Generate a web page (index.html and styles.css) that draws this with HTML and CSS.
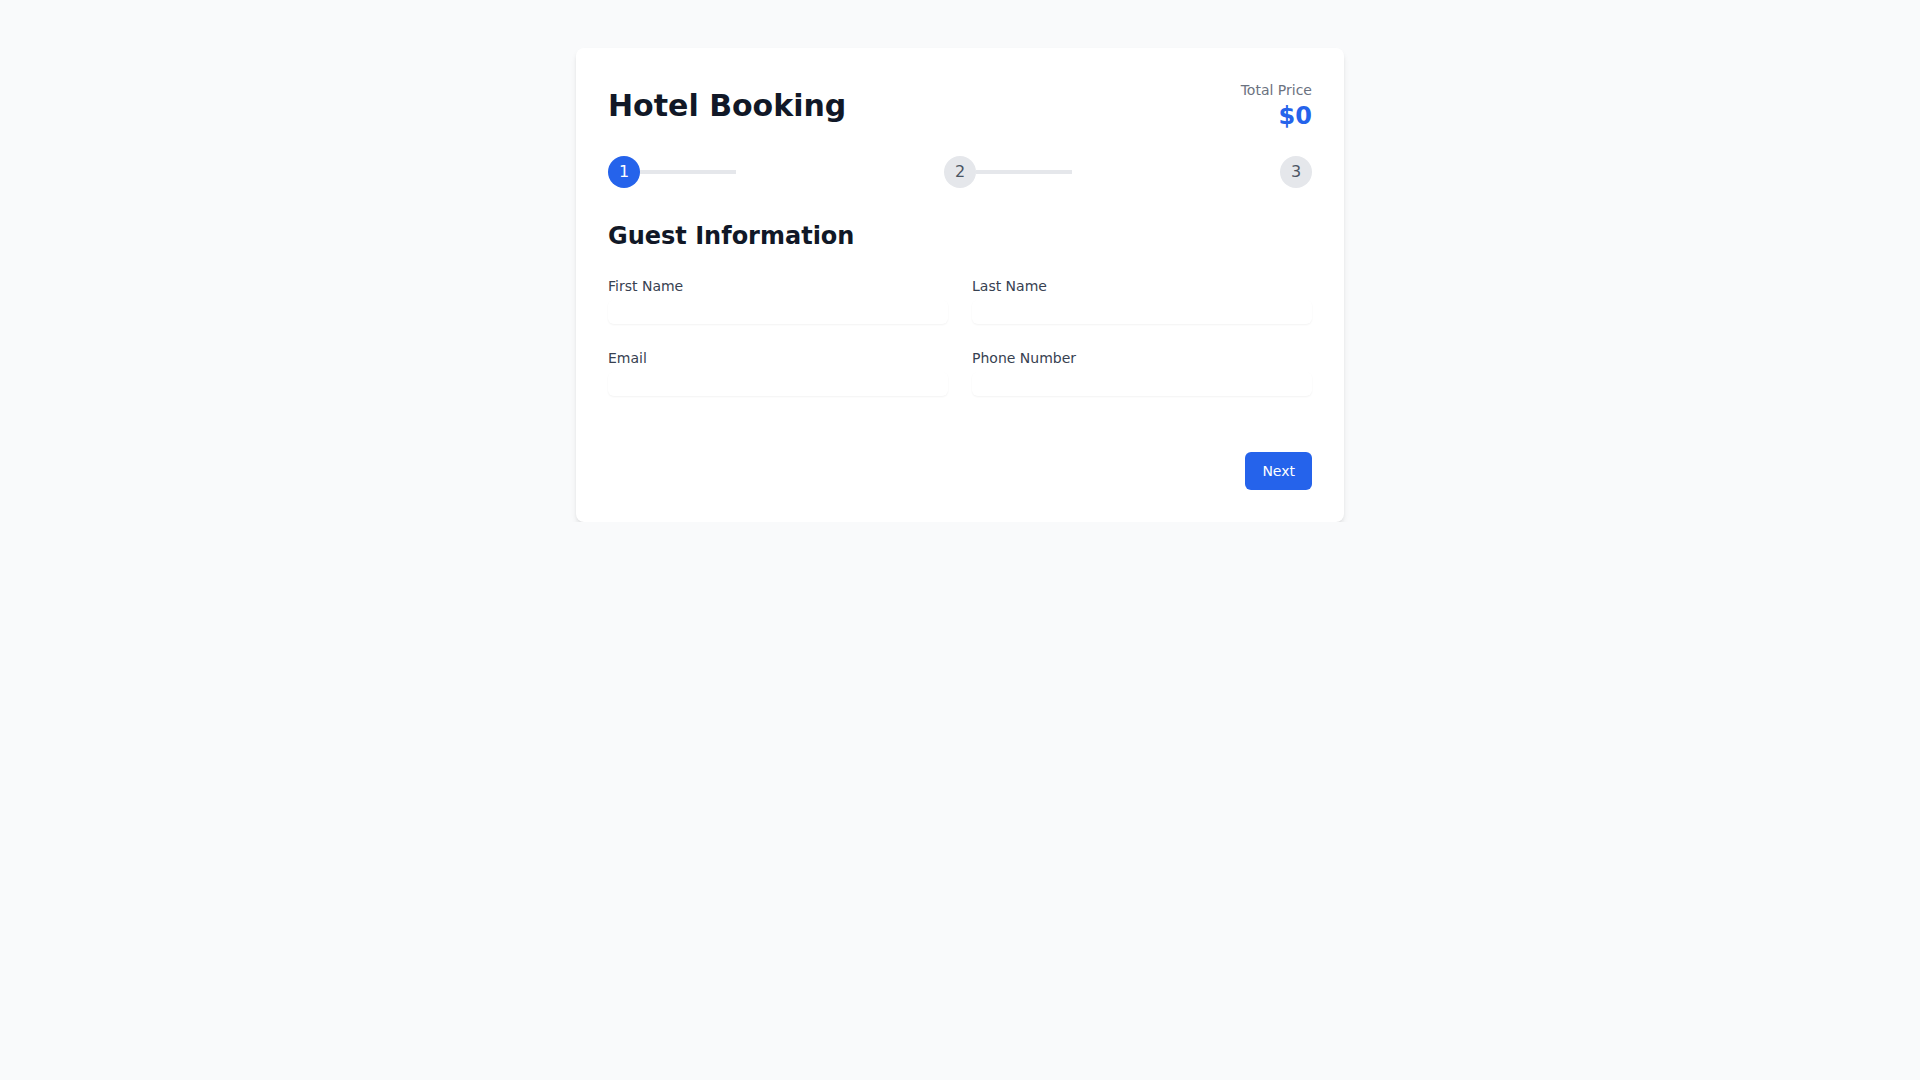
FILE: index.html
```html
<!DOCTYPE html>
<html lang="en">
<head>
<meta charset="utf-8">
<title>Hotel Booking</title>
<link rel="stylesheet" href="styles.css">
</head>
<body>
<main class="card">
  <header class="card-header">
    <h1 class="title">Hotel Booking</h1>
    <div class="price">
      <div class="price-label">Total Price</div>
      <div class="price-value">$0</div>
    </div>
  </header>

  <div class="stepper">
    <div class="step">
      <div class="step-circle active">1</div>
      <div class="step-line"></div>
    </div>
    <div class="step">
      <div class="step-circle">2</div>
      <div class="step-line"></div>
    </div>
    <div class="step">
      <div class="step-circle">3</div>
    </div>
  </div>

  <h2 class="section-title">Guest Information</h2>

  <form class="form-grid">
    <div class="field">
      <label class="label">First Name</label>
      <input class="input" type="text">
    </div>
    <div class="field">
      <label class="label">Last Name</label>
      <input class="input" type="text">
    </div>
    <div class="field">
      <label class="label">Email</label>
      <input class="input" type="email">
    </div>
    <div class="field">
      <label class="label">Phone Number</label>
      <input class="input" type="tel">
    </div>
  </form>

  <div class="actions">
    <button class="btn" type="button">Next</button>
  </div>
</main>
</body>
</html>
```

FILE: styles.css
```css
* {
  box-sizing: border-box;
}

html, body {
  margin: 0;
  padding: 0;
}

body {
  background: #f9fafb;
  font-family: "DejaVu Sans", sans-serif;
  color: #111827;
  padding-top: 48px;
}

.card {
  width: 768px;
  margin: 0 auto;
  background: #ffffff;
  border-radius: 8px;
  box-shadow: 0 4px 6px -1px rgba(0, 0, 0, 0.1), 0 2px 4px -2px rgba(0, 0, 0, 0.1);
  padding: 32px;
}

.card-header {
  display: flex;
  justify-content: space-between;
  align-items: center;
  margin-bottom: 24px;
}

.title {
  margin: 0;
  font-size: 30px;
  line-height: 36px;
  font-weight: 700;
  color: #111827;
}

.price {
  text-align: right;
}

.price-label {
  font-size: 14px;
  line-height: 20px;
  color: #6b7280;
}

.price-value {
  font-size: 24px;
  line-height: 32px;
  font-weight: 700;
  color: #2563eb;
}

.stepper {
  display: flex;
  justify-content: space-between;
  align-items: center;
  margin-bottom: 32px;
}

.step {
  display: flex;
  align-items: center;
}

.step-circle {
  width: 32px;
  height: 32px;
  border-radius: 50%;
  background: #e5e7eb;
  color: #4b5563;
  display: flex;
  align-items: center;
  justify-content: center;
  font-size: 16px;
  line-height: 24px;
}

.step-circle.active {
  background: #2563eb;
  color: #ffffff;
}

.step-line {
  width: 96px;
  height: 4px;
  background: #e5e7eb;
}

.section-title {
  margin: 0 0 24px 0;
  font-size: 24px;
  line-height: 32px;
  font-weight: 700;
  color: #111827;
}

.form-grid {
  display: grid;
  grid-template-columns: 1fr 1fr;
  gap: 24px;
  margin: 0;
}

.field {
  display: flex;
  flex-direction: column;
}

.label {
  font-size: 14px;
  line-height: 20px;
  color: #374151;
}

.input {
  margin-top: 4px;
  display: block;
  width: 100%;
  height: 24px;
  padding: 0;
  border: 0;
  border-radius: 6px;
  box-shadow: 0 1px 2px 0 rgba(0, 0, 0, 0.05);
  font-family: inherit;
  font-size: 16px;
  line-height: 24px;
  background: #ffffff;
  outline: none;
}

.actions {
  display: flex;
  justify-content: flex-end;
  margin-top: 56px;
}

.btn {
  font-family: inherit;
  font-size: 14px;
  line-height: 20px;
  padding: 8px 16px;
  border: 1px solid transparent;
  border-radius: 6px;
  background: #2563eb;
  color: #ffffff;
  cursor: pointer;
}
```
